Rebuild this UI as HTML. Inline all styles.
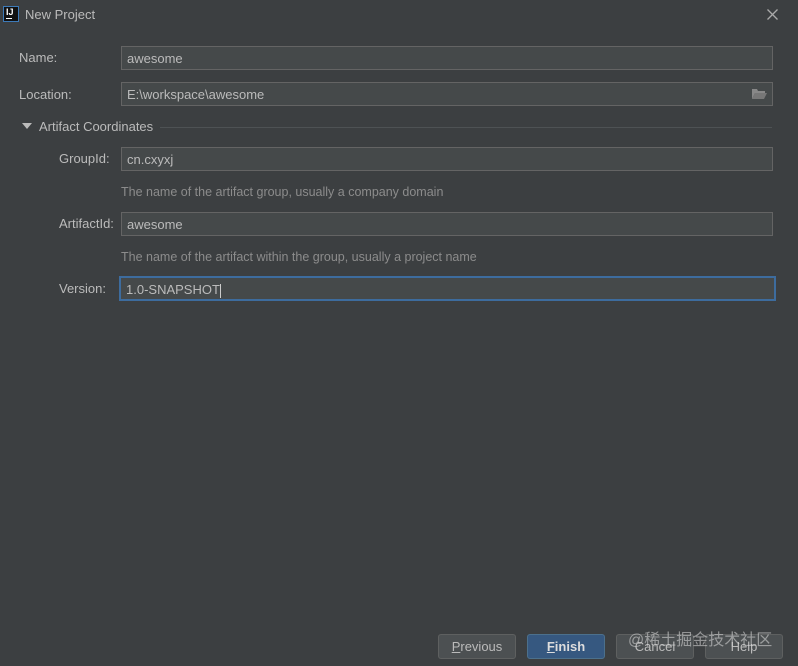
<!DOCTYPE html><html><head><style>
body{margin:0;width:798px;height:666px;background:#3c3f41;font-family:"Liberation Sans","Noto Sans CJK SC",sans-serif;font-size:13px;color:#bbbbbb;position:relative;overflow:hidden}
.a{position:absolute}
.in{position:absolute;left:121px;height:22px;background:#45494a;border:1px solid #646464;line-height:23px;padding-left:5px;box-sizing:content-box;width:645px;color:#bbb}
.lab{position:absolute;line-height:16px}
.hint{position:absolute;left:121px;color:#8c8c8c;font-size:12.5px}
.btn{position:absolute;top:634px;height:23px;width:76px;border:1px solid #5e6060;border-radius:3px;background:#4c5052;text-align:center;line-height:23px;color:#bbb}
</style></head><body>
<div class="a" style="left:3px;top:6px;width:14px;height:14px;background:#111;border:1px solid #3d7ab8"><span style="position:absolute;left:2px;top:0;font-size:9px;font-weight:bold;color:#fff">IJ</span><span style="position:absolute;left:2px;top:11px;width:6px;height:1px;background:#fff"></span></div>
<div class="a" style="left:25px;top:7px;font-size:13px">New Project</div>
<svg class="a" style="left:767px;top:9px" width="11" height="11"><path d="M0.5 0.5L10.5 10.5M10.5 0.5L0.5 10.5" stroke="#aaa" stroke-width="1.3"/></svg>
<div class="lab" style="left:19px;top:50px">Name:</div>
<div class="in" style="top:46px">awesome</div>
<div class="lab" style="left:19px;top:87px">Location:</div>
<div class="in" style="top:82px">E:\workspace\awesome</div>
<svg class="a" style="left:752px;top:88px" width="15" height="12"><path d="M0 1h5l1 2h7v2H3L0 11z" fill="#888"/><path d="M3 5h12l-3 6H0z" fill="#777"/></svg>
<div class="a" style="left:22px;top:123px;width:0;height:0;border-left:5px solid transparent;border-right:5px solid transparent;border-top:6px solid #bbb"></div>
<div class="lab" style="left:39px;top:119px">Artifact Coordinates</div>
<div class="a" style="left:160px;top:127px;width:612px;height:1px;background:#4e5254"></div>
<div class="lab" style="left:59px;top:151px">GroupId:</div>
<div class="in" style="top:147px">cn.cxyxj</div>
<div class="hint" style="top:185px">The name of the artifact group, usually a company domain</div>
<div class="lab" style="left:59px;top:216px">ArtifactId:</div>
<div class="in" style="top:212px">awesome</div>
<div class="hint" style="top:250px">The name of the artifact within the group, usually a project name</div>
<div class="lab" style="left:59px;top:281px">Version:</div>
<div class="in" style="top:276px;border:2px solid #3d6c9e;left:119px;width:648px;height:21px">1.0-SNAPSHOT<span style="display:inline-block;width:1px;height:14px;background:#ccc;vertical-align:middle"></span></div>
<div class="btn" style="left:438px"><u>P</u>revious</div>
<div class="btn" style="left:527px;background:#365880;border-color:#4c708c;font-weight:bold;color:#ddd"><u>F</u>inish</div>
<div class="btn" style="left:616px">Cancel</div>
<div class="btn" style="left:705px">Help</div>
<div class="a" style="left:628px;top:626px;font-size:16px;color:rgba(220,220,220,.55)">@稀土掘金技术社区</div>
</body></html>
